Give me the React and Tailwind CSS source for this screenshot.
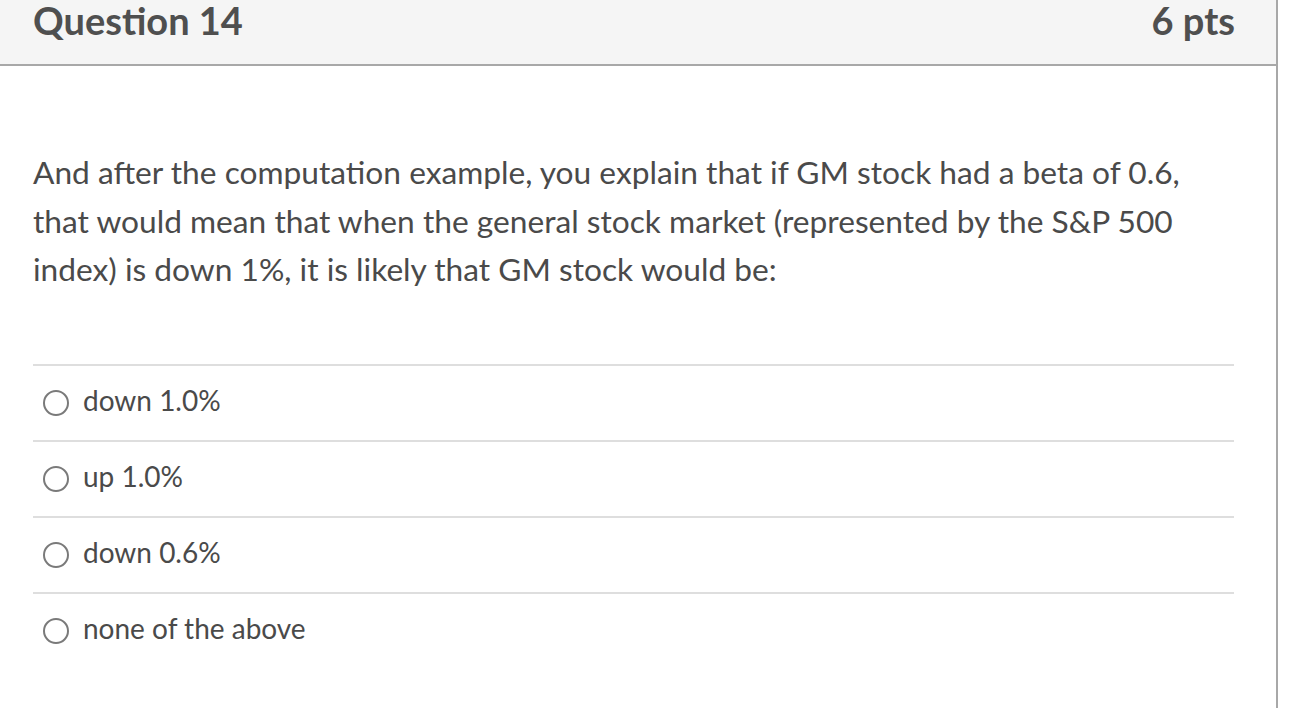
export default function App() {
  const options = ["down 1.0%", "up 1.0%", "down 0.6%", "none of the above"];
  return (
    <div className="w-[1292px] h-[708px] bg-white overflow-hidden" style={{ fontFamily: "Lato, 'Open Sans', sans-serif" }}>
      <div className="w-[1278px] h-[708px] border-r-2 border-[#a8a8a8]">
        <div className="h-[66px] bg-[#f5f5f5] border-b-2 border-[#a8a8a8] flex items-start justify-between pl-[33px] pr-[41px]">
          <h2 className="text-[38px] font-bold text-[#4f4f4f] leading-[46px] -mt-[3px]">Question 14</h2>
          <div className="text-[38px] font-bold text-[#4f4f4f] leading-[46px] -mt-[3px]">6 pts</div>
        </div>
        <div className="pl-[33px] pr-[42px]">
          <p className="mt-[82px] text-[31.7px] leading-[48.5px] text-[#4a4a4a]">
            And after the computation example, you explain that if GM stock had a beta of 0.6, that would mean that when the general stock market (represented by the S&amp;P 500 index) is down 1%, it is likely that GM stock would be:
          </p>
          <div className="mt-[70px]">
            {options.map((o) => (
              <div key={o} className="h-[76px] border-t-2 border-[#dedede] flex items-center">
                <span className="ml-[10px] w-[26px] h-[26px] rounded-full border-2 border-[#7a7a7a] bg-white" />
                <span className="ml-[14px] pb-[6px] text-[28px] text-[#4a4a4a]">{o}</span>
              </div>
            ))}
          </div>
        </div>
      </div>
    </div>
  );
}
